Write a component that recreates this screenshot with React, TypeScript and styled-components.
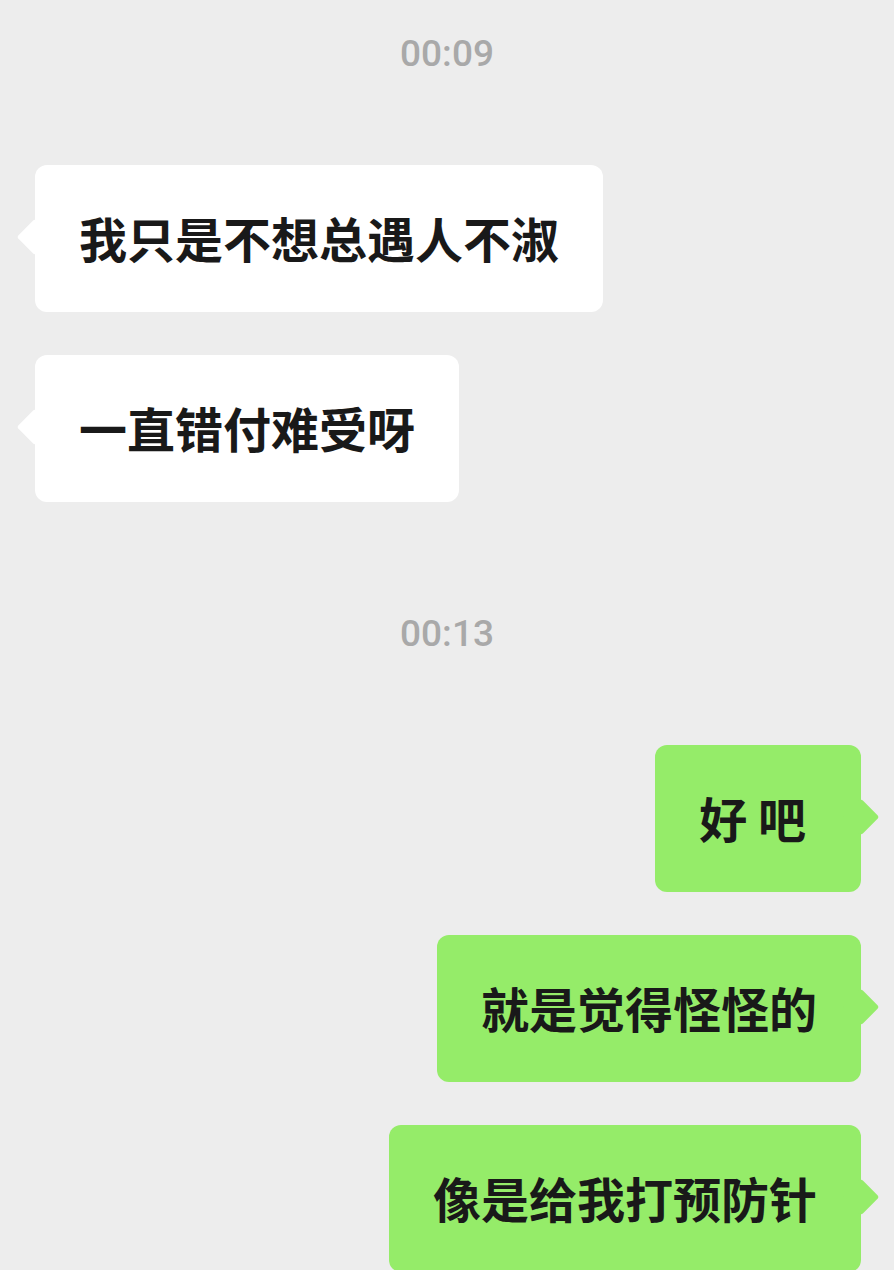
import React from "react";
import styled, { createGlobalStyle } from "styled-components";

const GlobalStyle = createGlobalStyle`
  html, body {
    margin: 0;
    padding: 0;
    background: #ededed;
  }
  body {
    font-family: "Noto Sans CJK SC", "Liberation Sans", sans-serif;
  }
`;

const ChatWrapper = styled.div`
  width: 894px;
  min-height: 1270px;
  box-sizing: border-box;
  padding-top: 32px;
  display: flex;
  flex-direction: column;
  gap: 43px;
  overflow: hidden;
`;

const TimeStamp = styled.div`
  text-align: center;
  font-family: Roboto, "Liberation Sans", Arial, sans-serif;
  font-size: 37px;
  line-height: 44px;
  font-weight: 500;
  color: #a9a9a9;
  margin-top: 67px;
  margin-bottom: 46px;
  &:first-child {
    margin-top: 0;
  }
`;

const Row = styled.div<{ mine?: boolean }>`
  display: flex;
  justify-content: ${(p) => (p.mine ? "flex-end" : "flex-start")};
  padding: ${(p) => (p.mine ? "0 33px 0 0" : "0 0 0 35px")};
`;

const Bubble = styled.div<{ mine?: boolean }>`
  position: relative;
  background: ${(p) => (p.mine ? "#95ec69" : "#ffffff")};
  color: #191919;
  border-radius: 12px;
  padding: 49px 44px 51px;
  font-size: 48px;
  line-height: 47px;
  font-weight: 700;
  white-space: pre;

  &::before {
    content: "";
    position: absolute;
    top: calc(50% - 15px);
    ${(p) => (p.mine ? "right: -13px;" : "left: -13px;")}
    width: 26px;
    height: 26px;
    border-radius: 3px;
    background: inherit;
    transform: rotate(45deg);
  }
`;

interface Message {
  id: number;
  text: string;
  mine?: boolean;
}

const message = ({ id, text, mine }: Message) => (
  <Row key={`msg-${id}`} mine={mine}>
    <Bubble mine={mine}>{text}</Bubble>
  </Row>
);

const firstGroup: Message[] = [
  { id: 1, text: "我只是不想总遇人不淑" },
  { id: 2, text: "一直错付难受呀" },
];

const secondGroup: Message[] = [
  { id: 3, text: "好 吧 ", mine: true },
  { id: 4, text: "就是觉得怪怪的", mine: true },
  { id: 5, text: "像是给我打预防针", mine: true },
];

export default function App() {
  return (
    <>
      <GlobalStyle />
      <ChatWrapper>
        <TimeStamp>00:09</TimeStamp>
        {firstGroup.map(message)}
        <TimeStamp>00:13</TimeStamp>
        {secondGroup.map(message)}
      </ChatWrapper>
    </>
  );
}
